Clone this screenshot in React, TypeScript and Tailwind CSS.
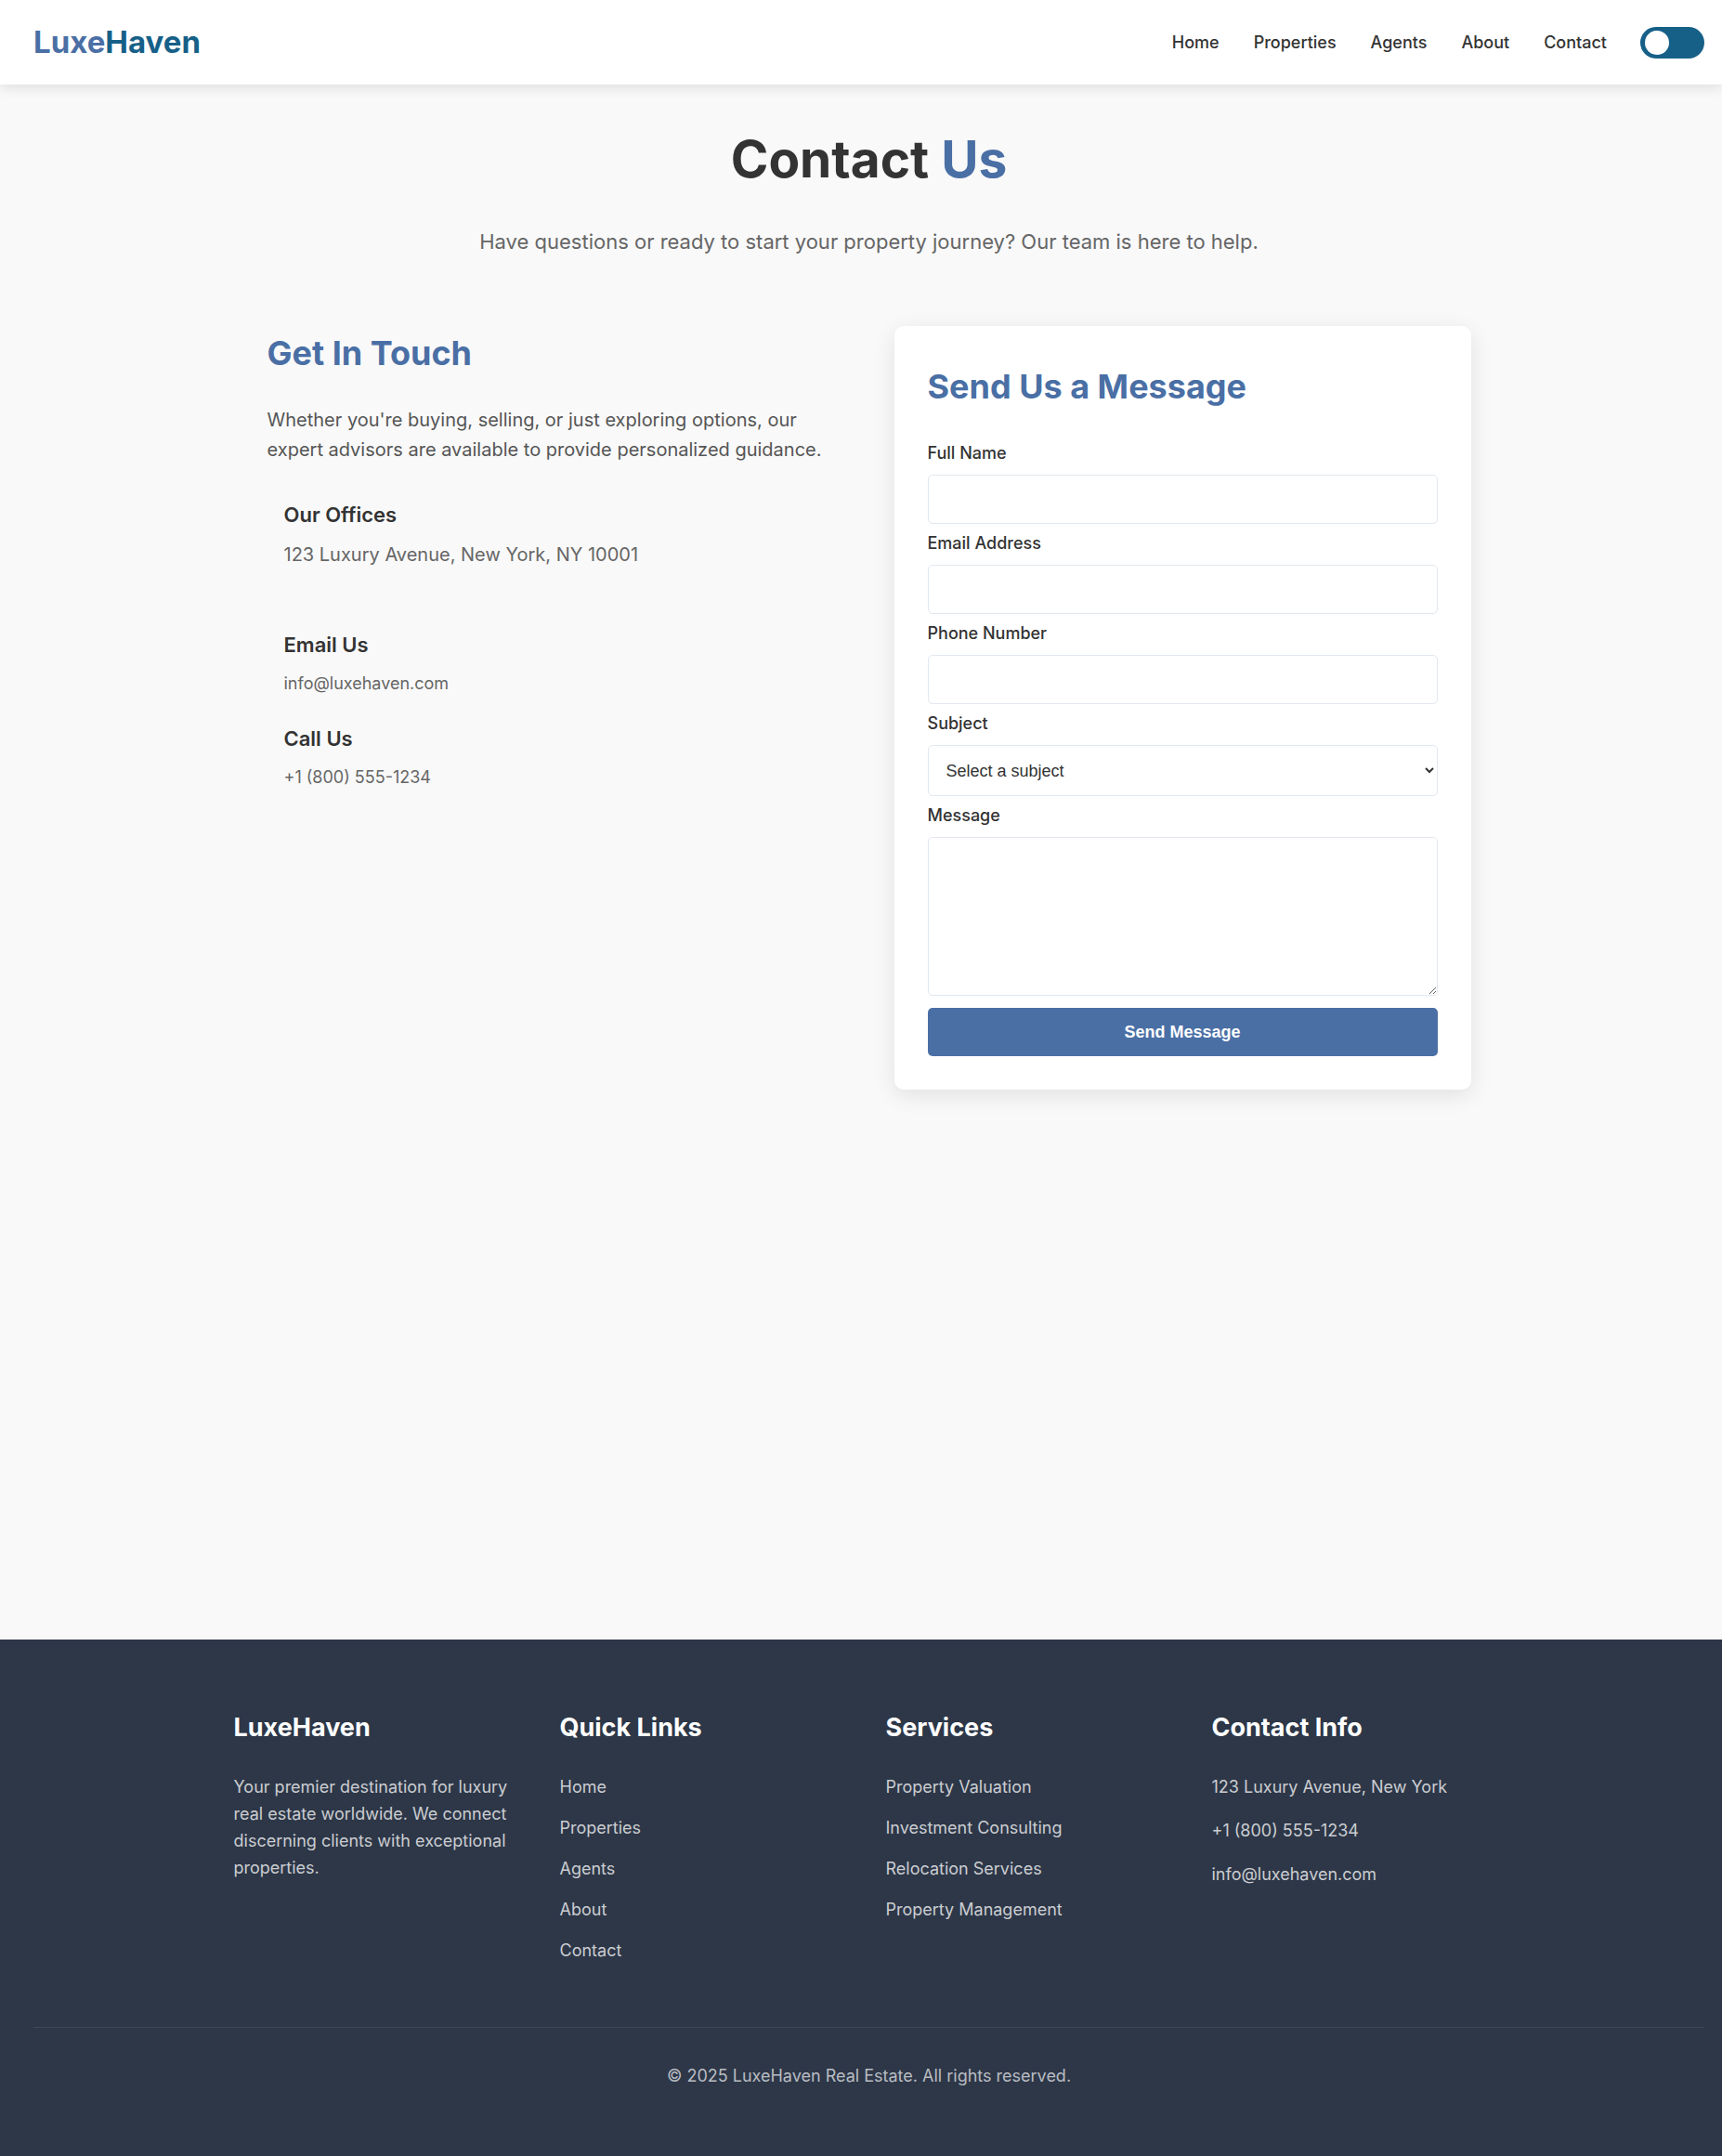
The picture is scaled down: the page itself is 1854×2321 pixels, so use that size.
import { useState } from "react";

const navLinks = ["Home", "Properties", "Agents", "About", "Contact"];
const services = [
  "Property Valuation",
  "Investment Consulting",
  "Relocation Services",
  "Property Management",
];

function Header() {
  const [dark, setDark] = useState(false);
  return (
    <header className="relative flex items-center justify-between bg-white py-5 pr-[19px] pl-9 shadow-[0_4px_12px_rgba(0,0,0,0.1)]">
      <a href="#home" className="text-[33px] leading-[51px] font-bold text-[#4a6fa5]">
        Luxe<span className="text-[#166088]">Haven</span>
      </a>
      <div className="flex items-center gap-9">
        <nav className="flex gap-[37px]">
          {navLinks.map((l) => (
            <a key={l} href={"#" + l.toLowerCase()} className="text-lg leading-[29px] font-medium text-[#333]">
              {l}
            </a>
          ))}
        </nav>
        <button
          type="button"
          role="switch"
          aria-checked={dark}
          aria-label="Dark mode"
          onClick={() => setDark(!dark)}
          className={
            "flex h-[34px] w-[69px] items-center rounded-full bg-[#166088] px-[5px] " +
            (dark ? "justify-end" : "justify-start")
          }
        >
          <span className="size-[26px] rounded-full bg-white" />
        </button>
      </div>
    </header>
  );
}

function Detail({ title, children }: { title: string; children: React.ReactNode }) {
  return (
    <div>
      <h3 className="mb-[9px] text-[22px] leading-[35px] font-semibold text-[#333]">{title}</h3>
      {children}
    </div>
  );
}

const fieldClass =
  "block w-full rounded-[5px] border border-[#e2e8f0] bg-white px-[18px] font-['Liberation_Sans',sans-serif] text-lg text-[#333]";
const labelClass = "mb-[9px] block text-lg leading-[29px] font-medium text-[#333]";

function TextField({ id, label, type }: { id: string; label: string; type: string }) {
  return (
    <div>
      <label htmlFor={id} className={labelClass}>
        {label}
      </label>
      <input id={id} type={type} className={fieldClass + " h-[53px]"} />
    </div>
  );
}

function ContactForm() {
  return (
    <section className="rounded-[10px] bg-white p-9 shadow-[0_6px_24px_rgba(0,0,0,0.1)]">
      <h2 className="mb-7 text-4xl leading-[58px] font-bold text-[#4a6fa5]">Send Us a Message</h2>
      <form onSubmit={(e) => e.preventDefault()}>
        <div className="flex flex-col gap-1.5">
          <TextField id="name" label="Full Name" type="text" />
          <TextField id="email" label="Email Address" type="email" />
          <TextField id="phone" label="Phone Number" type="tel" />
          <div>
            <label htmlFor="subject" className={labelClass}>
              Subject
            </label>
            <select id="subject" defaultValue="" className={fieldClass + " h-[55px] pr-0 pl-[15px]"}>
              <option value="">Select a subject</option>
              <option value="buying">Buying</option>
              <option value="selling">Selling</option>
            </select>
          </div>
          <div>
            <label htmlFor="message" className={labelClass}>
              Message
            </label>
            <textarea id="message" className={fieldClass + " h-[171px] resize-y py-3"} />
          </div>
        </div>
        <button
          type="submit"
          className="mt-[13px] block h-[52px] w-full rounded-[5px] bg-[#4a6fa5] font-['Liberation_Sans',sans-serif] text-lg font-bold text-white"
        >
          Send Message
        </button>
      </form>
    </section>
  );
}

const footHead = "mb-7 text-[27px] leading-[43px] font-bold text-white";

function LinkColumn({ title, items }: { title: string; items: string[] }) {
  return (
    <div>
      <h3 className={footHead}>{title}</h3>
      <ul>
        {items.map((i) => (
          <li key={i} className="mb-[15px]">
            <a href="#" className="block">
              {i}
            </a>
          </li>
        ))}
      </ul>
    </div>
  );
}

function Footer() {
  return (
    <footer className="bg-[#2d3748] pt-[73px] pr-[19px] pb-[72px] pl-9 text-lg leading-[29px] text-[#cbcdd1]">
      <div className="mx-auto grid max-w-[1368px] grid-cols-4 gap-9">
        <div>
          <h3 className={footHead}>LuxeHaven</h3>
          <p>
            Your premier destination for luxury real estate worldwide. We connect discerning clients with
            exceptional properties.
          </p>
        </div>
        <LinkColumn title="Quick Links" items={navLinks} />
        <LinkColumn title="Services" items={services} />
        <div>
          <h3 className={footHead}>Contact Info</h3>
          <address className="flex flex-col gap-[18px] not-italic">
            <p>123 Luxury Avenue, New York</p>
            <p>+1 (800) 555-1234</p>
            <p>info@luxehaven.com</p>
          </address>
        </div>
      </div>
      <p className="mt-[53px] border-t border-[#3f4859] pt-[37px] text-center text-[#b9bcc2]">
        © 2025 LuxeHaven Real Estate. All rights reserved.
      </p>
    </footer>
  );
}

export default function App() {
  return (
    <div className="flex min-h-screen flex-col bg-[#f9f9f9] font-['Inter',sans-serif] text-[#333]">
      <Header />
      <main className="flex-1 pt-[37px] pr-[19px] pb-16 pl-9">
        <div className="mx-auto max-w-[1296px]">
          <h1 className="mb-[29px] text-center text-[55px] leading-[86px] font-bold">
            Contact <span className="text-[#4a6fa5]">Us</span>
          </h1>
          <p className="mb-[73px] text-center text-[22px] leading-[35px] text-[#666]">
            Have questions or ready to start your property journey? Our team is here to help.
          </p>
          <div className="grid grid-cols-2 items-start gap-[54px]">
            <section>
              <h2 className="mb-[27px] text-4xl leading-[58px] font-bold text-[#4a6fa5]">Get In Touch</h2>
              <p className="mb-[37px] text-xl leading-8 text-[#555]">
                Whether you're buying, selling, or just exploring options, our expert advisors are available to
                provide personalized guidance.
              </p>
              <div className="pl-[18px] text-[#666]">
                <Detail title="Our Offices">
                  <p className="mb-16 text-xl leading-8">123 Luxury Avenue, New York, NY 10001</p>
                </Detail>
                <Detail title="Email Us">
                  <p className="mb-7 text-lg leading-[29px]">info@luxehaven.com</p>
                </Detail>
                <Detail title="Call Us">
                  <p className="text-lg leading-[29px]">+1 (800) 555-1234</p>
                </Detail>
              </div>
            </section>
            <ContactForm />
          </div>
        </div>
      </main>
      <Footer />
    </div>
  );
}
